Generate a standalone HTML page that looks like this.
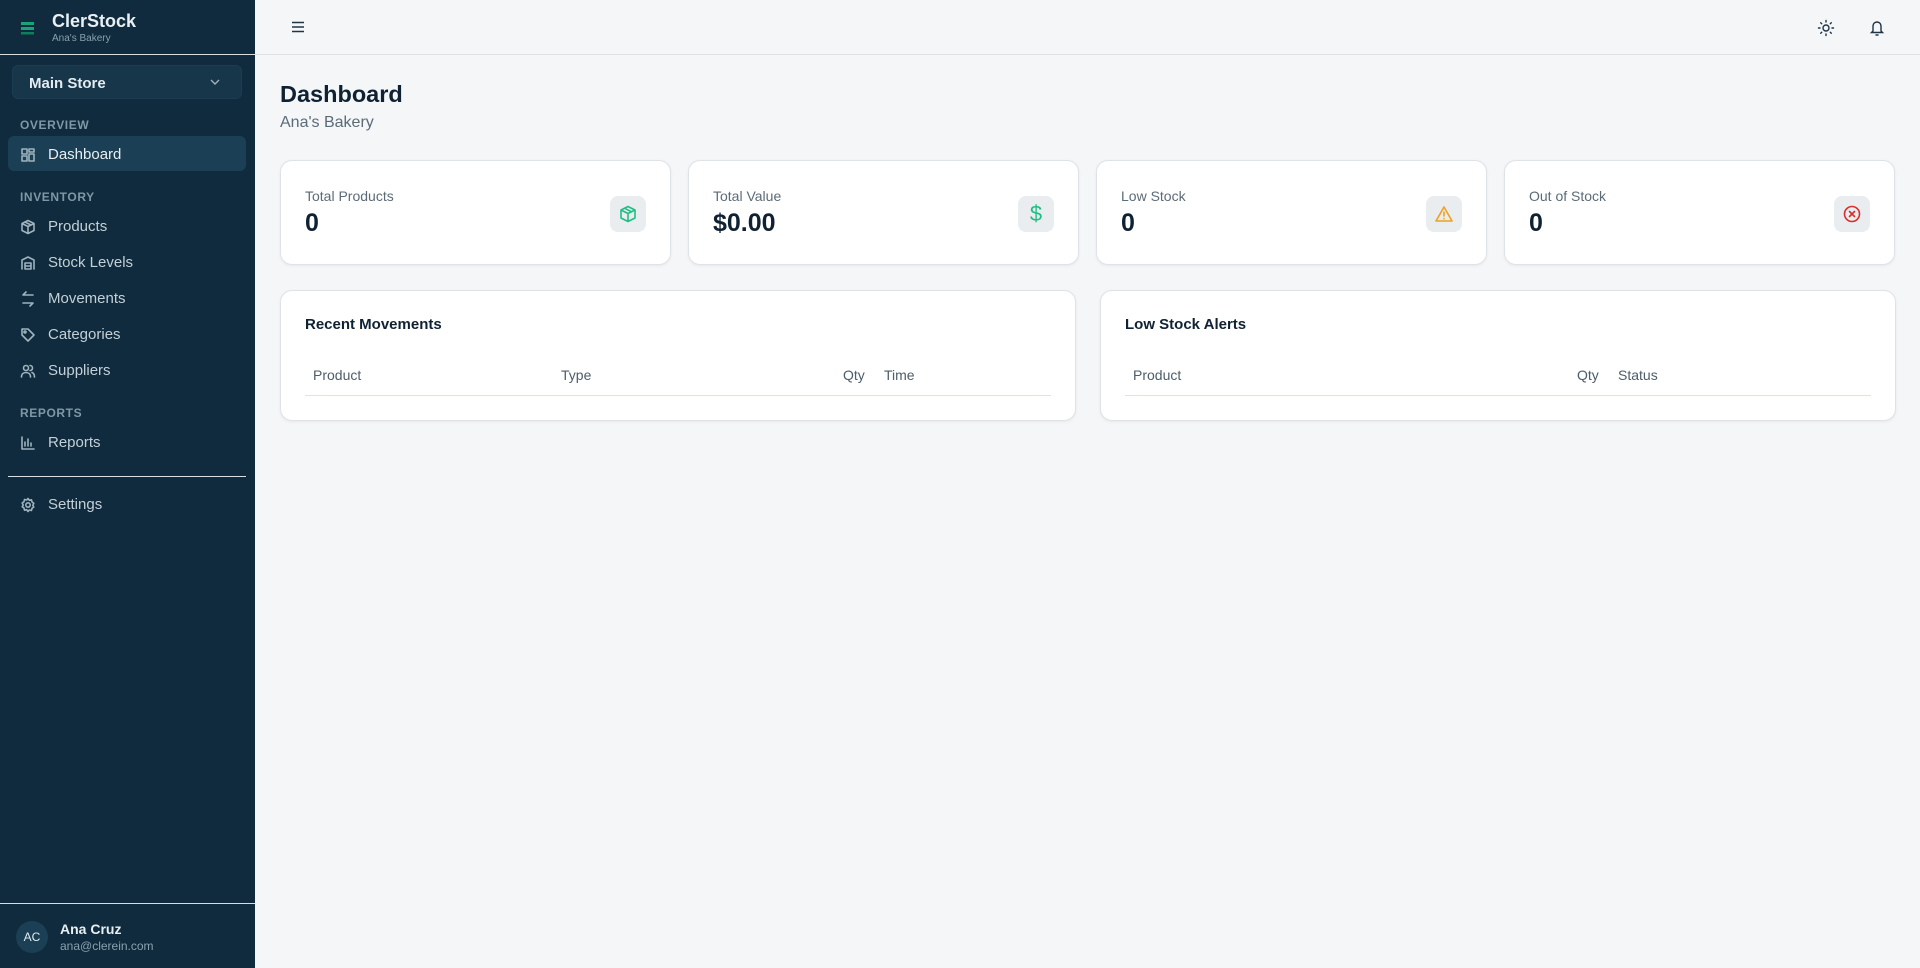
<!DOCTYPE html>
<html><head><meta charset="utf-8"><style>
*{box-sizing:border-box;margin:0;padding:0}
body{width:1920px;height:968px;overflow:hidden;font-family:"Liberation Sans",sans-serif;background:#f4f6f8;position:relative}
.sb{position:absolute;left:0;top:0;width:255px;height:968px;background:#0f2b3d;color:#c9d6de}
.abs{position:absolute}
.sec{position:absolute;left:20px;font-size:12px;font-weight:bold;letter-spacing:.6px;color:#7f97a6}
.item{position:absolute;left:8px;width:238px;height:35px;border-radius:6px;display:flex;align-items:center;padding-left:12px;padding-top:2px;font-size:15px;color:#c3d0d8}
.item svg{width:16px;height:16px;margin-right:12px;fill:none;stroke:#9fb2be;stroke-width:1.6;stroke-linecap:round;stroke-linejoin:round}
.item.act{background:#1b3f55;color:#e8eef2}
.card{position:absolute;top:160px;width:391px;height:105px;background:#fff;border:1px solid #dfe3e7;border-radius:12px;box-shadow:0 1px 3px rgba(0,0,0,.06)}
.card .l{position:absolute;left:24px;top:27px;font-size:14px;color:#5b6b78}
.card .v{position:absolute;left:24px;top:48px;font-size:25px;font-weight:bold;color:#0f2233}
.card .ic{position:absolute;right:24px;top:35px;width:36px;height:36px;border-radius:8px;background:#e9edf0;display:flex;align-items:center;justify-content:center}
.ic svg{width:20px;height:20px;fill:none;stroke-width:1.6;stroke-linecap:round;stroke-linejoin:round}
.pn{position:absolute;top:290px;height:131px;background:#fff;border:1px solid #dfe3e7;border-radius:12px;box-shadow:0 1px 3px rgba(0,0,0,.06)}
.pn h3{position:absolute;left:24px;top:25px;font-size:15px;color:#0f2233}
.pn .th{position:absolute;left:24px;right:24px;top:76px;height:29px;border-bottom:1px solid #dfe3e7;font-size:14px;color:#4d5d6a}
.th span{position:absolute;top:0}
</style></head><body>
<div class="sb">
 <svg class="abs" style="left:21px;top:21px" width="14" height="14" viewBox="0 0 14 14"><rect x="0" y="1" width="13" height="3" fill="#17a577"/><rect x="0" y="6" width="13" height="3" fill="#17a577"/><rect x="0" y="11" width="13" height="2.5" fill="#0f7e5c"/></svg>
 <div class="abs" style="left:52px;top:11px;font-size:18px;font-weight:bold;color:#e9f0f4">ClerStock</div>
 <div class="abs" style="left:52px;top:33px;font-size:10px;color:#8aa0ad">Ana's Bakery</div>
 <div class="abs" style="left:0;top:54px;width:255px;height:1px;background:#d8dee2"></div>
 <div class="abs" style="left:12px;top:65px;width:230px;height:34px;border-radius:6px;background:#173649;border:1px solid #1d3c50;font-size:15px;font-weight:bold;color:#e4ecf1;padding:9px 0 0 16px">Main Store
  <svg class="abs" style="right:20px;top:12px" width="12" height="8" viewBox="0 0 12 8"><path d="M2 2l4 4 4-4" stroke="#9fb2be" stroke-width="1.4" fill="none"/></svg></div>
 <div class="sec" style="top:118px">OVERVIEW</div>
 <div class="item act" style="top:136px"><svg viewBox="0 0 16 16"><rect x="2" y="2" width="5" height="5"/><rect x="9" y="2" width="5" height="3"/><rect x="2" y="9" width="5" height="5"/><rect x="9" y="7" width="5" height="7"/></svg>Dashboard</div>
 <div class="sec" style="top:190px">INVENTORY</div>
 <div class="item" style="top:208px"><svg viewBox="0 0 16 16"><path d="M8 1.5l6 3v7l-6 3-6-3v-7z M2 4.5l6 3 6-3 M8 7.5v7 M5 3l6 3"/></svg>Products</div>
 <div class="item" style="top:244px"><svg viewBox="0 0 16 16"><path d="M2 14V5l6-3 6 3v9 M5 8h6 M5 11h6 M5 14h6 M5 8v6 M11 8v6"/></svg>Stock Levels</div>
 <div class="item" style="top:280px"><svg viewBox="0 0 16 16"><path d="M13 4H3l3-3 M3 12h10l-3 3"/></svg>Movements</div>
 <div class="item" style="top:316px"><svg viewBox="0 0 16 16"><path d="M2 2h6l6 6-6 6-6-6z"/><circle cx="5" cy="5" r="1"/></svg>Categories</div>
 <div class="item" style="top:352px"><svg viewBox="0 0 16 16"><circle cx="6" cy="5" r="2.5"/><path d="M1.5 14c0-3 2-4.5 4.5-4.5s4.5 1.5 4.5 4.5 M10 2.5a2.5 2.5 0 010 5 M12 9.5c1.5.5 2.5 2 2.5 4.5"/></svg>Suppliers</div>
 <div class="sec" style="top:406px">REPORTS</div>
 <div class="item" style="top:424px"><svg viewBox="0 0 16 16"><path d="M2 2v12h12 M5 11V7 M8 11V4 M11 11V8"/></svg>Reports</div>
 <div class="abs" style="left:8px;top:476px;width:238px;height:1px;background:#d8dee2"></div>
 <div class="item" style="top:486px"><svg viewBox="0 0 16 16"><circle cx="8" cy="8" r="2.2"/><path d="M8 1.5l1.3 1.8 2.2-.5.5 2.2 1.8 1.3-1 2 1 1.7-1.8 1.3-.5 2.2-2.2-.5L8 14.5l-1.3-1.8-2.2.5-.5-2.2-1.8-1.3 1-1.7-1-2 1.8-1.3.5-2.2 2.2.5z"/></svg>Settings</div>
 <div class="abs" style="left:0;top:903px;width:255px;height:1px;background:#d8dee2"></div>
 <div class="abs" style="left:16px;top:921px;width:32px;height:32px;border-radius:50%;background:#1b3f55;color:#e4ecf1;font-size:12px;text-align:center;line-height:32px">AC</div>
 <div class="abs" style="left:60px;top:921px;font-size:14px;font-weight:bold;color:#e9f0f4">Ana Cruz</div>
 <div class="abs" style="left:60px;top:939px;font-size:12px;color:#8aa0ad">ana@clerein.com</div>
</div>
<div class="abs" style="left:255px;top:0;width:1665px;height:55px;border-bottom:1px solid #dfe3e7;background:#f4f6f8"></div>
<svg class="abs" style="left:291px;top:21px" width="14" height="12" viewBox="0 0 14 12"><path d="M1 1.5h12M1 6h12M1 10.5h12" stroke="#1f3444" stroke-width="1.4"/></svg>
<svg class="abs" style="left:1817px;top:19px" width="18" height="18" viewBox="0 0 18 18" fill="none" stroke="#1f3444" stroke-width="1.4" stroke-linecap="round"><circle cx="9" cy="9" r="3"/><path d="M9 1.5v1.5M9 15v1.5M1.5 9h1.5M15 9h1.5M3.7 3.7l1 1M13.3 13.3l1 1M3.7 14.3l1-1M13.3 4.7l1-1"/></svg>
<svg class="abs" style="left:1869px;top:19px" width="16" height="18" viewBox="0 0 16 18" fill="none" stroke="#1f3444" stroke-width="1.4" stroke-linecap="round"><path d="M4 12V7a4 4 0 018 0v5l1.5 1.5h-11z M7 16h2"/></svg>
<div class="abs" style="left:280px;top:81px;font-size:23.5px;font-weight:bold;color:#0f2233">Dashboard</div>
<div class="abs" style="left:280px;top:114px;font-size:16px;color:#5b6b78">Ana's Bakery</div>
<div class="card" style="left:280px"><div class="l">Total Products</div><div class="v">0</div><div class="ic"><svg viewBox="0 0 20 20" stroke="#1fbf84"><path d="M10 2.5l7 3.5v8l-7 3.5-7-3.5v-8z M3 6l7 3.5 7-3.5 M10 9.5v8 M6.5 4.2l7 3.6"/></svg></div></div>
<div class="card" style="left:688px"><div class="l">Total Value</div><div class="v">$0.00</div><div class="ic" style="color:#1fbf84;font-size:22px">$</div></div>
<div class="card" style="left:1096px"><div class="l">Low Stock</div><div class="v">0</div><div class="ic"><svg viewBox="0 0 20 20" stroke="#f0a020"><path d="M10 3l8 14H2z M10 8v4 M10 14.5v.2"/></svg></div></div>
<div class="card" style="left:1504px"><div class="l">Out of Stock</div><div class="v">0</div><div class="ic"><svg viewBox="0 0 20 20" stroke="#dc2b2b"><circle cx="10" cy="10" r="7.5"/><path d="M7.5 7.5l5 5M12.5 7.5l-5 5"/></svg></div></div>
<div class="pn" style="left:280px;width:796px"><h3>Recent Movements</h3><div class="th"><span style="left:8px">Product</span><span style="left:256px">Type</span><span style="left:538px">Qty</span><span style="left:579px">Time</span></div></div>
<div class="pn" style="left:1100px;width:796px"><h3>Low Stock Alerts</h3><div class="th"><span style="left:8px">Product</span><span style="left:452px">Qty</span><span style="left:493px">Status</span></div></div>
</body></html>
